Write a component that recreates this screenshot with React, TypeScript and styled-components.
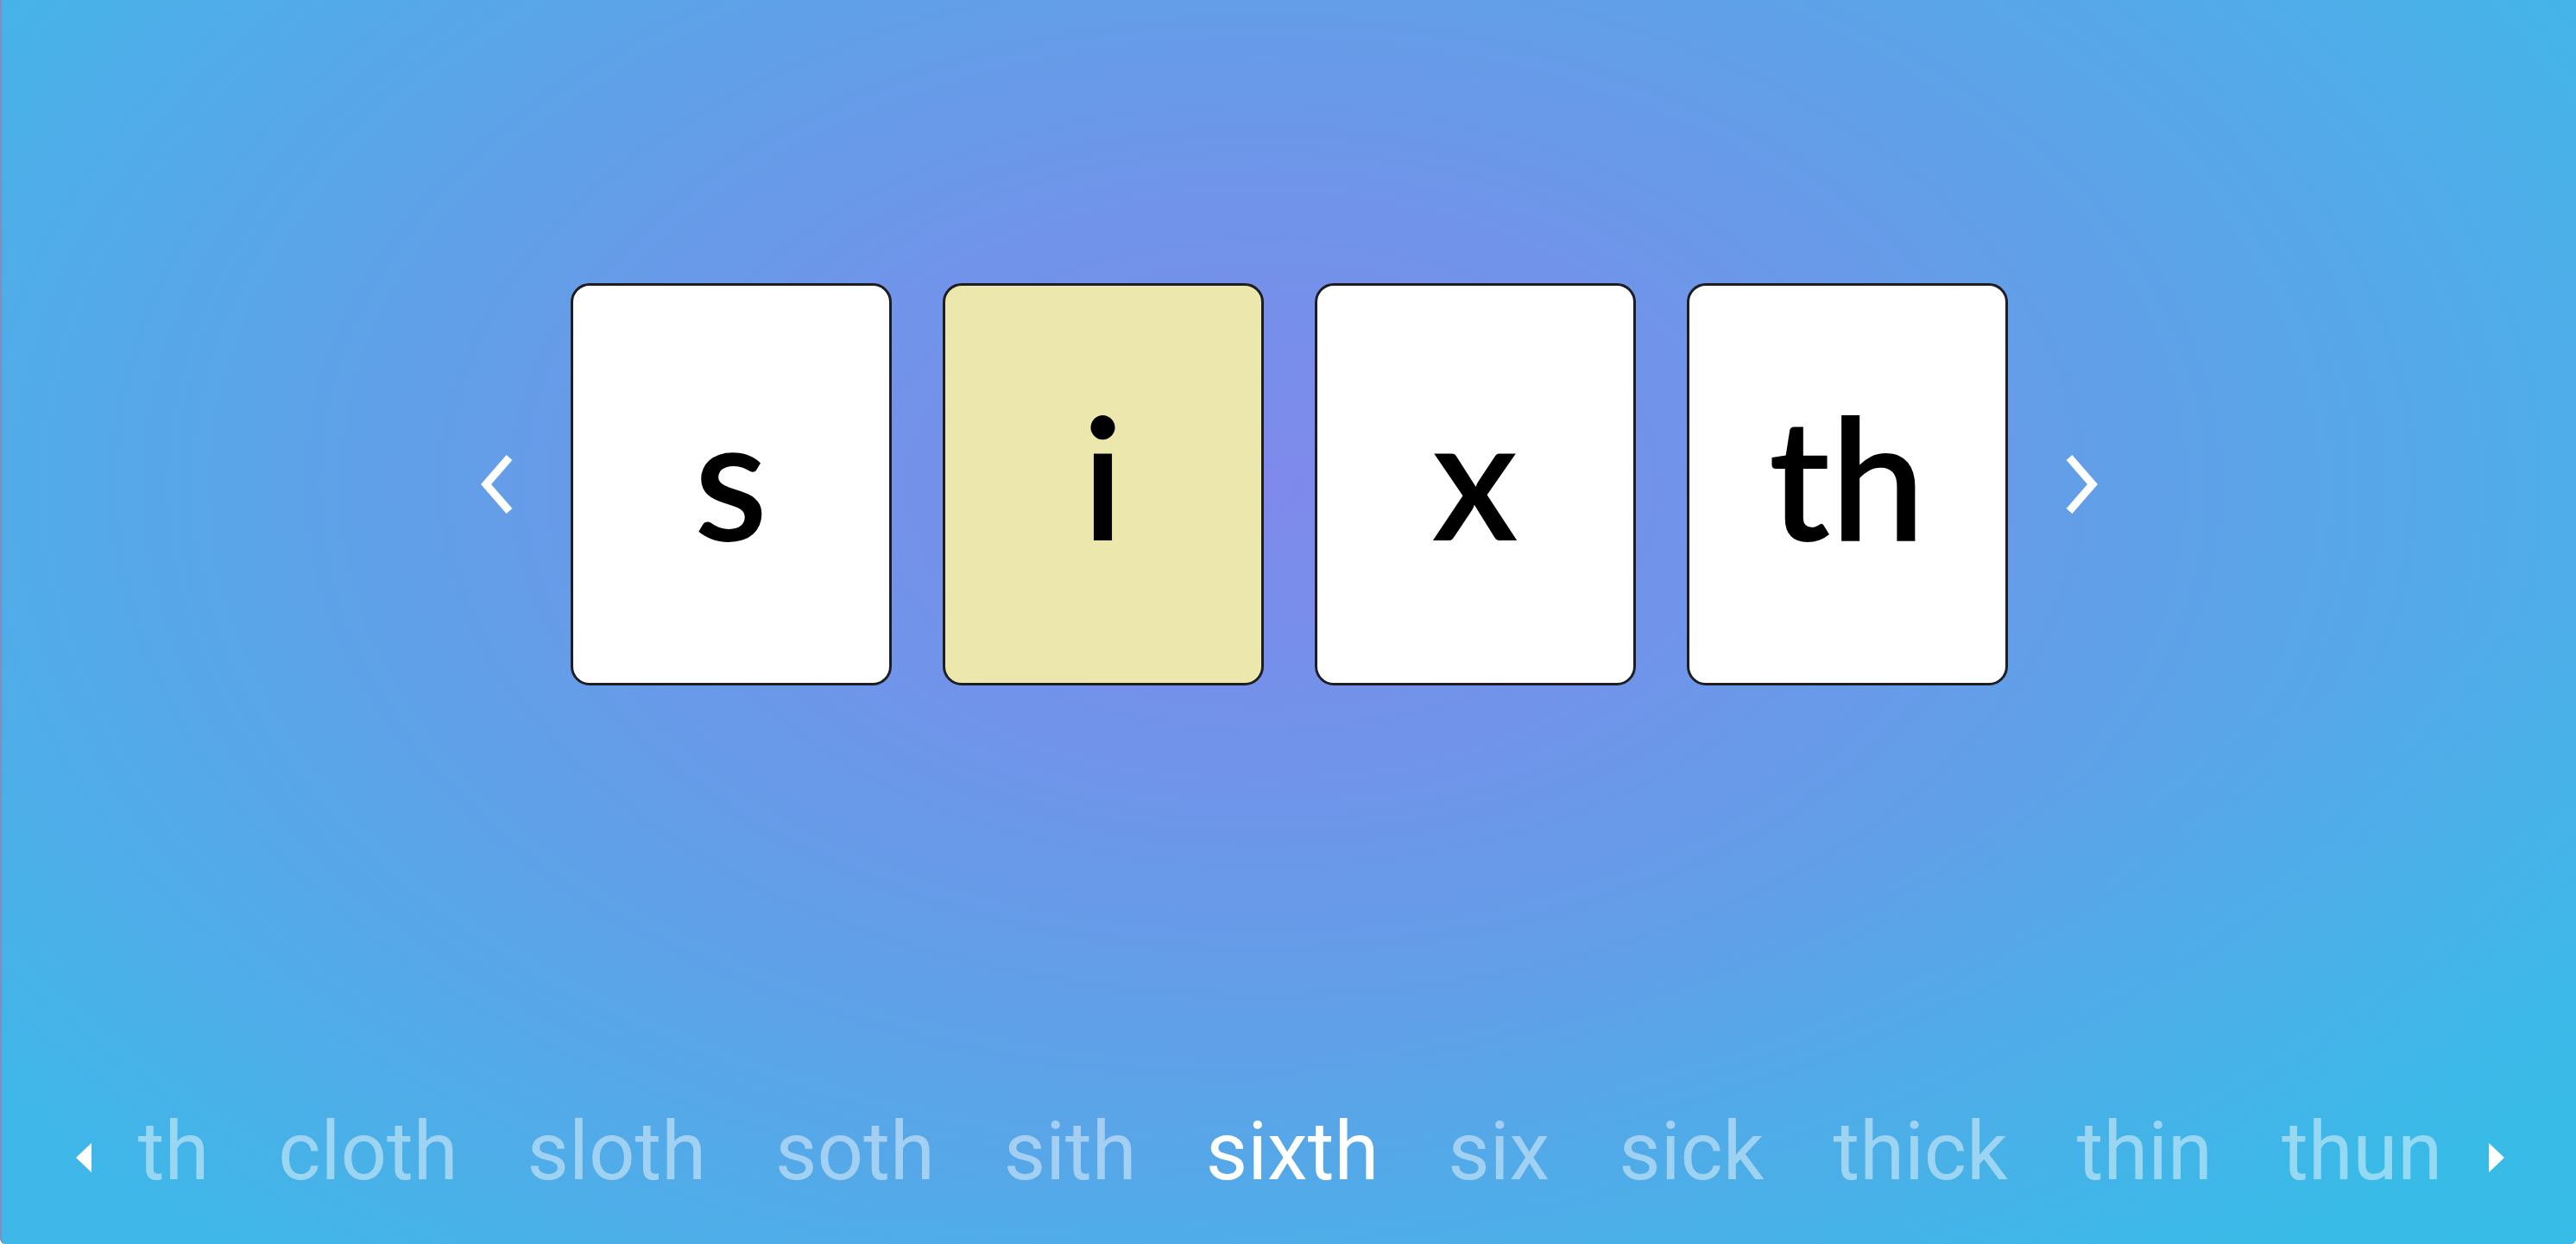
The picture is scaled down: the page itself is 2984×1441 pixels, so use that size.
import React from "react";
import styled, { createGlobalStyle } from "styled-components";

const GlobalStyle = createGlobalStyle`
  html, body {
    margin: 0;
    padding: 0;
    overflow: hidden;
  }
  body {
    font-family: Roboto, "Liberation Sans", sans-serif;
  }
  * { box-sizing: border-box; }
`;

const Page = styled.div`
  width: 100vw;
  height: 100vh;
  display: flex;
  flex-direction: column;
  border-left: 2px solid #7d90bd;
  border-bottom-left-radius: 6px;
  border-bottom-right-radius: 6px;
  background: radial-gradient(
    ellipse 62% 80% at 49% 39%,
    #7f89eb 0%,
    #7194ea 28%,
    #60a0e8 55%,
    #50ace8 80%,
    #3fb7e8 100%
  );
  background-color: #3fb7e8;
  overflow: hidden;
`;

const BgLayer = styled.div`
  flex: 1;
  display: flex;
  flex-direction: column;
  background: linear-gradient(160deg, rgba(255,255,255,0) 70%, rgba(40,196,230,0.35) 100%);
`;

const Stage = styled.div`
  display: flex;
  align-items: center;
  justify-content: center;
  gap: 62px;
  padding-top: 328px;
`;

const Arrow = styled.button`
  width: 46px;
  height: 74px;
  padding: 0;
  border: none;
  background: none;
  display: flex;
  cursor: pointer;
  svg { display: block; }
`;

const Cards = styled.div`
  display: flex;
  gap: 59px;
`;

const Card = styled.div<{ $active?: boolean }>`
  width: 372px;
  height: 466px;
  border: 3px solid #1d1d22;
  border-radius: 22px;
  background: ${(p) => (p.$active ? "#ece7ad" : "#ffffff")};
  display: flex;
  align-items: center;
  justify-content: center;
  padding-bottom: 20px;
  font-family: Lato, "Noto Sans", sans-serif;
  font-weight: 600;
  font-size: 196px;
  line-height: 1;
  color: #000;
`;

const WordBar = styled.div`
  margin-top: auto;
  display: flex;
  align-items: flex-start;
  padding: 0 83px 50px 86px;
`;

const Tri = styled.div<{ $dir: "left" | "right" }>`
  width: 0;
  height: 0;
  margin-top: 46px;
  border-top: 17px solid transparent;
  border-bottom: 17px solid transparent;
  ${(p) =>
    p.$dir === "left"
      ? "border-right: 18px solid #ffffff;"
      : "border-left: 18px solid #ffffff;"}
`;

const Words = styled.div`
  flex: 1;
  display: flex;
  justify-content: center;
  gap: 80px;
  overflow: hidden;
`;

const Word = styled.span<{ $active?: boolean }>`
  font-family: Roboto, "Liberation Sans", sans-serif;
  font-size: 94px;
  line-height: 1.2;
  font-weight: 400;
  white-space: nowrap;
  color: ${(p) => (p.$active ? "#ffffff" : "rgba(255,255,255,0.46)")};
`;

const letters = ["s", "i", "x", "th"];
const words = ["th", "cloth", "sloth", "soth", "sith", "sixth", "six", "sick", "thick", "thin", "thun"];

export default function App() {
  return (
    <>
      <GlobalStyle />
      <Page>
        <BgLayer>
          <Stage>
            <Arrow aria-label="previous">
              <svg width="46" height="74" viewBox="0 0 46 74">
                <path d="M37 6 L10 37 L37 68" fill="none" stroke="#fff" strokeWidth="9" strokeLinejoin="miter" />
              </svg>
            </Arrow>
            <Cards>
              {letters.map((l, i) => (
                <Card key={i} $active={i === 1}>
                  {l}
                </Card>
              ))}
            </Cards>
            <Arrow aria-label="next">
              <svg width="46" height="74" viewBox="0 0 46 74">
                <path d="M9 6 L36 37 L9 68" fill="none" stroke="#fff" strokeWidth="9" strokeLinejoin="miter" />
              </svg>
            </Arrow>
          </Stage>
          <WordBar>
            <Tri $dir="left" />
            <Words>
              {words.map((w) => (
                <Word key={w} $active={w === "sixth"}>
                  {w}
                </Word>
              ))}
            </Words>
            <Tri $dir="right" />
          </WordBar>
        </BgLayer>
      </Page>
    </>
  );
}
